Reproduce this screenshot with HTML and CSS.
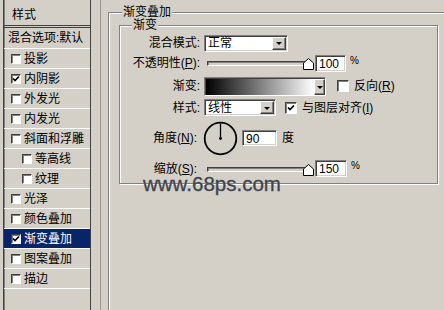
FILE: index.html
```html
<!DOCTYPE html>
<html lang="zh-CN">
<head>
    <meta charset="UTF-8">
    <meta name="viewport" content="width=device-width, initial-scale=1.0">
    <title>图层样式 - 渐变叠加</title>
    <link rel="stylesheet" href="styles.css">
</head>
<body>
    <div class="dialog">
        <!-- Left: style list -->
        <div class="style-list">
            <div class="list-header">样式</div>
            <div class="list-item blend">混合选项:默认</div>
            <div class="list-item"><span class="check"></span>投影</div>
            <div class="list-item"><span class="check"><svg viewBox="0 0 8 8"><polyline points="1,3.5 3,5.5 7,1.5"/></svg></span>内阴影</div>
            <div class="list-item"><span class="check"></span>外发光</div>
            <div class="list-item"><span class="check"></span>内发光</div>
            <div class="list-item"><span class="check"></span>斜面和浮雕</div>
            <div class="list-item sub"><span class="check"></span>等高线</div>
            <div class="list-item sub"><span class="check"></span>纹理</div>
            <div class="list-item"><span class="check"></span>光泽</div>
            <div class="list-item"><span class="check"></span>颜色叠加</div>
            <div class="list-item active"><span class="check"><svg viewBox="0 0 8 8"><polyline points="1,3.5 3,5.5 7,1.5"/></svg></span>渐变叠加</div>
            <div class="list-item"><span class="check"></span>图案叠加</div>
            <div class="list-item"><span class="check"></span>描边</div>
        </div>

        <div class="divider"></div>

        <!-- Right: gradient overlay settings -->
        <div class="content">
            <div class="group outer">
                <span class="group-title">渐变叠加</span>
                <div class="group inner">
                    <span class="group-title">渐变</span>
                    <div class="form-grid">
                        <div class="label">混合模式:</div>
                        <div class="controls">
                            <div class="select blend-mode"><span>正常</span><span class="drop-btn"></span></div>
                        </div>

                        <div class="label">不透明性(<u>P</u>):</div>
                        <div class="controls">
                            <div class="slider">
                                <div class="track"></div>
                                <svg class="thumb" viewBox="0 0 11 12"><path d="M0.5 11.5 V5 L5.5 0.5 L10.5 5 V11.5 Z"/></svg>
                            </div>
                            <div class="num-input w31">100</div>
                            <span class="unit">%</span>
                        </div>

                        <div class="label">渐变:</div>
                        <div class="controls">
                            <div class="gradient-picker"><div class="gradient-bar"></div><span class="drop-btn small"></span></div>
                            <span class="check lg gap-11"></span>
                            <span class="opt-text">反向(<u>R</u>)</span>
                        </div>

                        <div class="label">样式:</div>
                        <div class="controls">
                            <div class="select style-type"><span>线性</span><span class="drop-btn"></span></div>
                            <span class="check lg gap-9"><svg viewBox="0 0 10 10"><polyline points="2,4.5 4,6.5 8,2.5"/></svg></span>
                            <span class="opt-text">与图层对齐(<u>I</u>)</span>
                        </div>

                        <div class="label angle">角度(<u>N</u>):</div>
                        <div class="controls">
                            <svg class="dial" viewBox="0 0 35 35">
                                <circle cx="17.5" cy="17.5" r="15.8"/>
                                <line x1="17.5" y1="17.5" x2="17.5" y2="2.5"/>
                                <circle class="dot" cx="17.5" cy="17.5" r="1.4"/>
                            </svg>
                            <div class="num-input w35">90</div>
                            <span class="deg">度</span>
                        </div>

                        <div class="label angle">缩放(<u>S</u>):</div>
                        <div class="controls">
                            <div class="slider">
                                <div class="track"></div>
                                <svg class="thumb" viewBox="0 0 11 12"><path d="M0.5 11.5 V5 L5.5 0.5 L10.5 5 V11.5 Z"/></svg>
                            </div>
                            <div class="num-input w32">150</div>
                            <span class="unit">%</span>
                        </div>
                    </div>
                </div>
                <div class="watermark">www.68ps.com</div>
            </div>
        </div>
    </div>
</body>
</html>
```

FILE: styles.css
```css
* {
    margin: 0;
    padding: 0;
    box-sizing: border-box;
}

html, body {
    height: 310px;
    overflow: hidden;
}

body {
    background-color: #d4d0c8;
    color: #000;
    font-family: "Liberation Sans", "Noto Sans CJK SC", sans-serif;
    font-size: 12px;
    line-height: 14px;
}

.dialog {
    display: flex;
    height: 310px;
    overflow: hidden;
}

/* Style list */
.style-list {
    margin-left: 3px;
    width: 88px;
    height: 100%;
    flex-shrink: 0;
    border-left: 1px solid #404040;
    border-right: 1px solid #404040;
    box-shadow: inset 1px 0 0 #808080;
}

.list-header {
    height: 28px;
    padding: 4px 0 0 8px;
    border-bottom: 3px double #404040;
    display: flex;
    align-items: center;
}

.list-item {
    height: 20px;
    display: flex;
    align-items: center;
    padding-left: 7px;
    border-bottom: 1px solid #fff;
    white-space: nowrap;
}

.list-item.blend {
    height: 21px;
    padding-left: 4px;
}

.list-item.sub {
    padding-left: 18px;
}

.list-item.active {
    background-color: #0a246a;
    color: #fff;
}

.check {
    width: 10px;
    height: 10px;
    margin-right: 3px;
    flex-shrink: 0;
    background-color: #fff;
    border: 1px solid;
    border-color: #404040 #fff #fff #404040;
    box-shadow: inset 1px 1px 0 #808080;
    display: flex;
}

.check svg {
    width: 100%;
    height: 100%;
    fill: none;
    stroke: #000;
    stroke-width: 1.7;
}

.check.lg {
    width: 12px;
    height: 12px;
    margin-right: 0;
}

.divider {
    width: 1px;
    margin-left: 9px;
    background-color: #9c988f;
    flex-shrink: 0;
}

/* Group boxes */
.content {
    padding: 12px 0 0 7px;
    height: 310px;
    overflow: hidden;
}

.group {
    position: relative;
    border: 1px solid #808080;
    box-shadow: inset 1px 1px 0 #fff, 1px 1px 0 #fff;
}

.group-title {
    position: absolute;
    top: -8px;
    padding: 0 1px;
    background-color: #d4d0c8;
    white-space: nowrap;
}

.outer {
    width: 345px;
    height: 308px;
    padding: 12px 0 0 10px;
}

.outer > .group-title {
    left: 13px;
}

.inner {
    width: 319px;
    height: 159px;
    padding: 7px 0 6px 0;
}

.inner > .group-title {
    left: 12px;
}

.form-grid {
    display: grid;
    grid-template-columns: 80px auto;
    grid-template-rows: 20px 20px 26px 17px 44px 17px;
    column-gap: 4px;
    align-items: center;
}

.label {
    text-align: right;
    white-space: nowrap;
}

.label.angle {
    padding-right: 3px;
}

.controls {
    display: flex;
    align-items: center;
    white-space: nowrap;
}

/* Combo boxes */
.select {
    height: 17px;
    display: flex;
    align-items: center;
    padding: 0 1px 0 3px;
    background-color: #fff;
    border: 1px solid;
    border-color: #808080 #fff #fff #808080;
    box-shadow: inset 1px 1px 0 #404040, inset -1px -1px 0 #d4d0c8;
}

.select.blend-mode {
    width: 84px;
}

.select.style-type {
    width: 72px;
}

.drop-btn {
    margin-left: auto;
    width: 14px;
    height: 13px;
    background-color: #d4d0c8;
    border: 1px solid;
    border-color: #fff #404040 #404040 #fff;
    box-shadow: inset -1px -1px 0 #808080;
    display: flex;
    align-items: center;
    justify-content: center;
}

.drop-btn::after {
    content: "";
    border-left: 3px solid transparent;
    border-right: 3px solid transparent;
    border-top: 3px solid #000;
    margin-top: 1px;
}

/* Sliders */
.slider {
    position: relative;
    width: 111px;
    height: 16px;
    padding: 6px 6px 0 3px;
}

.track {
    height: 5px;
    border: 1px solid;
    border-color: #404040 #fff #fff #404040;
    box-shadow: inset 1px 1px 0 #808080;
    background-color: #d4d0c8;
}

.thumb {
    position: absolute;
    right: 1px;
    top: 3px;
    width: 11px;
    height: 12px;
    fill: #fff;
    stroke: #000;
    stroke-width: 1;
}

.num-input {
    height: 17px;
    padding: 1px 0 0 3px;
    background-color: #fff;
    border: 1px solid;
    border-color: #808080 #fff #fff #808080;
    box-shadow: inset 1px 1px 0 #404040, inset -1px -1px 0 #d4d0c8;
}

.num-input.w31 { width: 31px; }
.num-input.w32 { width: 32px; }
.num-input.w35 { width: 35px; margin-left: 4px; height: 16px; }

.unit {
    font-size: 10px;
    margin-left: 4px;
    align-self: flex-start;
    line-height: 12px;
}

/* Gradient picker */
.gradient-picker {
    width: 122px;
    height: 19px;
    display: flex;
    align-items: stretch;
    border: 1px solid;
    border-color: #808080 #fff #fff #808080;
    box-shadow: inset 1px 1px 0 #404040;
    padding: 1px 0 0 1px;
}

.gradient-bar {
    flex: 1;
    background: linear-gradient(to right, #000, #fff);
}

.drop-btn.small {
    width: 11px;
    height: auto;
}

.gap-11 { margin-left: 11px; }
.gap-9 { margin-left: 9px; }

.opt-text {
    margin-left: 5px;
}

/* Angle dial */
.dial {
    width: 35px;
    height: 35px;
    margin-left: -1px;
    fill: none;
    stroke: #000;
    stroke-width: 1.8;
}

.dial line {
    stroke-width: 1.3;
}

.dial .dot {
    fill: #000;
    stroke: none;
}

.deg {
    margin-left: 5px;
}

/* Watermark */
.watermark {
    position: absolute;
    left: 34px;
    top: 163px;
    font-family: "Liberation Sans", sans-serif;
    font-size: 20.5px;
    line-height: 16px;
    color: #3f444e;
    -webkit-text-stroke: 0.4px #3f444e;
    text-shadow: 0 0 1px rgba(255, 255, 255, 0.7);
    z-index: 2;
}
```
